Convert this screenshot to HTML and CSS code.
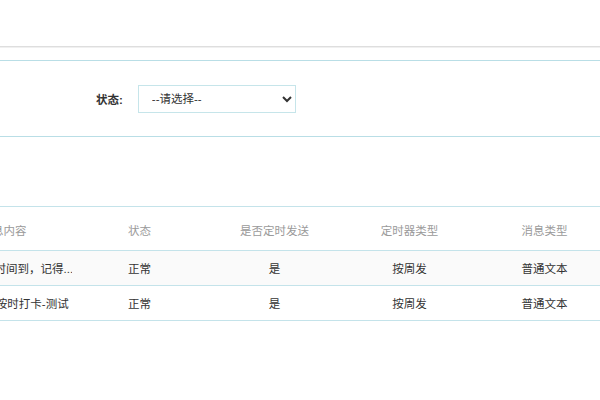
FILE: index.html
```html
<!DOCTYPE html>
<html lang="zh-CN">
<head>
    <meta charset="UTF-8">
    <meta name="viewport" content="width=device-width, initial-scale=1.0">
    <title>定时消息</title>
    <link rel="stylesheet" href="styles.css">
</head>
<body>
    <div class="topbar"></div>

    <div class="viewport">
        <div class="content">
            <form class="search-panel">
                <div class="form-item">
                    <label for="status">状态:</label>
                    <select id="status">
                        <option>--请选择--</option>
                        <option>正常</option>
                        <option>停用</option>
                    </select>
                </div>
            </form>

            <div class="grid">
                <div class="row head">
                    <div class="cell">消息内容</div>
                    <div class="cell">状态</div>
                    <div class="cell">是否定时发送</div>
                    <div class="cell">定时器类型</div>
                    <div class="cell">消息类型</div>
                    <div class="cell">操作</div>
                </div>
                <div class="row odd">
                    <div class="cell clip">温馨提示：时间到，记得...</div>
                    <div class="cell">正常</div>
                    <div class="cell">是</div>
                    <div class="cell">按周发</div>
                    <div class="cell">普通文本</div>
                    <div class="cell">编辑</div>
                </div>
                <div class="row">
                    <div class="cell">每天上班前按时打卡-测试</div>
                    <div class="cell">正常</div>
                    <div class="cell">是</div>
                    <div class="cell">按周发</div>
                    <div class="cell">普通文本</div>
                    <div class="cell">编辑</div>
                </div>
            </div>
        </div>
    </div>
</body>
</html>
```

FILE: styles.css
```css
* {
    margin: 0;
    padding: 0;
    box-sizing: border-box;
}

body {
    background-color: #fff;
    font-family: "Liberation Sans", "Noto Sans CJK SC", sans-serif;
    font-size: 11.5px;
    color: #333;
}

.topbar {
    height: 47px;
    border-bottom: 1px solid #dedede;
    box-shadow: 0 1px 0 #f0f0f0;
}

/* page is scrolled sideways, left edge of the table is out of view */
.viewport {
    overflow: hidden;
    width: 600px;
}

.content {
    margin-left: -65px;
    width: 760px;
}

.search-panel {
    margin-top: 13px;
    height: 77px;
    border-top: 1px solid #b9dee6;
    border-bottom: 1px solid #b9dee6;
    display: flex;
    align-items: center;
    padding-left: 161px;
}

.form-item {
    display: flex;
    align-items: center;
    gap: 15px;
}

.form-item label {
    font-weight: bold;
    color: #333;
}

.form-item select {
    width: 158px;
    height: 28px;
    border: 1px solid #c6e5ea;
    border-radius: 0;
    background-color: #fff;
    padding-left: 9px;
    font-family: inherit;
    font-size: 11.5px;
    color: #333;
    outline: none;
}

.grid {
    margin-top: 69px;
    border-top: 1px solid #c4e3ea;
}

.row {
    display: grid;
    grid-template-columns: 137px 135px 135px 135px 135px 135px;
    height: 35px;
    border-bottom: 1px solid #c4e3ea;
    align-items: center;
}

.row.head {
    height: 44px;
    color: #9a9a9a;
    padding-top: 2px;
}

.row.odd {
    background-color: #fafafa;
}

.cell {
    text-align: center;
    white-space: nowrap;
}

.clip {
    overflow: hidden;
    text-align: left;
    padding-left: 2px;
}
```
